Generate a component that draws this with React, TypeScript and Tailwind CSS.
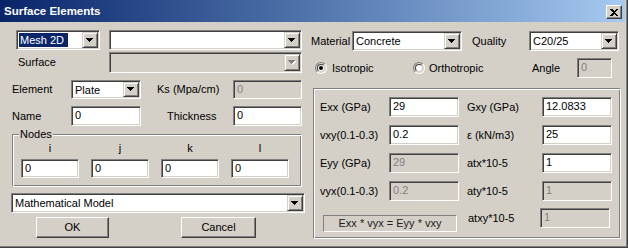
import React from 'react';

const sunken =
  'border border-t-[#808080] border-l-[#808080] border-b-white border-r-white shadow-[inset_1px_1px_0_#404040,inset_-1px_-1px_0_#d4d0c8]';
const raised =
  'border border-t-[#d4d0c8] border-l-[#d4d0c8] border-r-[#404040] border-b-[#404040] shadow-[inset_1px_1px_0_#fff,inset_-1px_-1px_0_#808080] bg-[#d4d0c8]';
const button =
  'border border-t-white border-l-white border-r-[#404040] border-b-[#404040] shadow-[inset_-1px_-1px_0_#808080] bg-[#d4d0c8]';

function Arrow({ disabled }: { disabled?: boolean }) {
  const fill = disabled ? '#808080' : '#000';
  return (
    <svg width="8" height="5" viewBox="0 0 8 5" shapeRendering="crispEdges">
      {disabled && (
        <g fill="#fff">
          <rect x="1" y="1" width="7" height="1" />
          <rect x="2" y="2" width="5" height="1" />
          <rect x="3" y="3" width="3" height="1" />
          <rect x="4" y="4" width="1" height="1" />
        </g>
      )}
      <g fill={fill}>
        <rect x="0" y="0" width="7" height="1" />
        <rect x="1" y="1" width="5" height="1" />
        <rect x="2" y="2" width="3" height="1" />
        <rect x="3" y="3" width="1" height="1" />
      </g>
    </svg>
  );
}

function Combo({
  value,
  className,
  disabled,
  selected,
}: {
  value?: string;
  className: string;
  disabled?: boolean;
  selected?: boolean;
}) {
  return (
    <div className={`${sunken} ${className} flex p-[1px] ${disabled ? 'bg-[#d4d0c8]' : 'bg-white'}`}>
      <div className="flex-1 flex items-start pl-[1px] pt-[1px] overflow-hidden leading-[14px]">
        {selected ? (
          <span className="bg-[#0a246a] text-white px-[1px] pr-[4px]">{value}</span>
        ) : (
          <span className="px-[1px]">{value}</span>
        )}
      </div>
      <div className={`${raised} w-[16px] h-full flex items-center justify-center`}>
        <Arrow disabled={disabled} />
      </div>
    </div>
  );
}

function Edit({ value, className, disabled }: { value: string; className: string; disabled?: boolean }) {
  return (
    <div
      className={`${sunken} ${className} h-[20px] pl-[3px] pt-[2px] leading-[13px] ${
        disabled ? 'bg-[#d4d0c8] text-[#808080]' : 'bg-white'
      }`}
    >
      {value}
    </div>
  );
}

function Radio({ checked }: { checked?: boolean }) {
  return (
    <div className="w-[12px] h-[12px] rounded-full border border-t-[#808080] border-l-[#808080] border-b-white border-r-white bg-[#d4d0c8] p-[1px]">
      <div className="w-full h-full rounded-full bg-white border border-t-[#404040] border-l-[#404040] border-b-[#d4d0c8] border-r-[#d4d0c8] flex items-center justify-center">
        {checked && <div className="w-[4px] h-[4px] rounded-full bg-black" />}
      </div>
    </div>
  );
}

const rows = [
  { l1: 'Exx (GPa)', v1: '29', l2: 'Gxy (GPa)', v2: '12.0833' },
  { l1: 'vxy(0.1-0.3)', v1: '0.2', l2: 'ε (kN/m3)', v2: '25' },
  { l1: 'Eyy (GPa)', v1: '29', d1: true, l2: 'atx*10-5', v2: '1' },
  { l1: 'vyx(0.1-0.3)', v1: '0.2', d1: true, l2: 'aty*10-5', v2: '1', d2: true },
];

export default function App() {
  return (
    <div
      className="w-[628px] h-[248px] bg-[#d4d0c8] border-r border-b border-r-[#404040] border-b-[#404040] shadow-[inset_-1px_-1px_0_#808080] pr-[2px] overflow-hidden text-[11px] text-black"
      style={{ fontFamily: '"Liberation Sans", Arial, sans-serif' }}
    >
      {/* title bar */}
      <div className="h-[22px] bg-linear-to-r from-[#0a246a] to-[#a6caf0] flex items-start justify-between pl-[4px] pr-[3px]">
        <span className="text-white font-bold text-[11.5px] leading-[14px] mt-[4px]">Surface Elements</span>
        <div className={`${button} w-[16px] h-[14px] mt-[5px] flex items-center justify-center`}>
          <svg width="8" height="7" viewBox="0 0 8 7" shapeRendering="crispEdges">
            <path d="M0 0h2l2 2 2-2h2L5 3.5 8 7H6L4 5 2 7H0l3-3.5z" fill="#000" />
          </svg>
        </div>
      </div>

      <div className="flex">
        {/* left column */}
        <div className="w-[311px] flex flex-col">
          <div className="flex h-[20px] mt-[8px] pl-[16px] gap-[9px]">
            <Combo value="Mesh 2D" selected className="w-[84px] h-[20px]" />
            <Combo className="w-[193px] h-[20px]" />
          </div>
          <div className="flex items-center h-[21px] mt-[2px]">
            <span className="w-[109px] pl-[18px]">Surface</span>
            <Combo disabled className="w-[193px] h-[21px]" />
          </div>
          <div className="flex items-center h-[19px] mt-[7px]">
            <span className="w-[71px] pl-[12px]">Element</span>
            <Combo value="Plate" className="w-[70px] h-[19px]" />
            <span className="w-[92px] pl-[16px]">Ks (Mpa/cm)</span>
            <Edit value="0" disabled className="w-[69px] !h-[19px]" />
          </div>
          <div className="flex items-center h-[20px] mt-[7px]">
            <span className="w-[71px] pl-[12px]">Name</span>
            <Edit value="0" className="w-[70px]" />
            <span className="w-[92px] pl-[26px]">Thickness</span>
            <Edit value="0" className="w-[69px]" />
          </div>

          <fieldset className="ml-[12px] w-[290px] mt-[2px] border border-[#808080] border-b-white border-r-white shadow-[inset_1px_1px_0_#fff,inset_-1px_-1px_0_#808080] pb-[8px]">
            <legend className="ml-[6px] px-[1px] leading-[13px] bg-[#d4d0c8]">Nodes</legend>
            <div className="flex pl-[8px] gap-[12px] leading-[13px] mt-[1px]">
              {['i', 'j', 'k', 'l'].map(n => (
                <span key={n} className="w-[58px] text-center">
                  {n}
                </span>
              ))}
            </div>
            <div className="flex pl-[8px] gap-[12px] mt-[4px]">
              {['a', 'b', 'c', 'd'].map(n => (
                <Edit key={n} value="0" className="w-[58px] !h-[19px]" />
              ))}
            </div>
          </fieldset>

          <Combo value="Mathematical Model" className="ml-[11px] w-[294px] h-[20px] mt-[6px]" />

          <div className="flex mt-[4px] h-[21px]">
            <div className={`${button} ml-[36px] w-[73px] h-[21px] flex items-center justify-center`}>OK</div>
            <div className={`${button} ml-[72px] w-[75px] h-[21px] flex items-center justify-center`}>Cancel</div>
          </div>
        </div>

        {/* right column */}
        <div className="flex flex-col">
          <div className="flex items-center h-[20px] mt-[9px]">
            <span className="w-[41px]">Material</span>
            <Combo value="Concrete" className="w-[110px] h-[20px]" />
            <span className="w-[67px] pl-[10px]">Quality</span>
            <Combo value="C20/25" className="w-[90px] h-[20px]" />
          </div>
          <div className="flex items-center h-[20px] mt-[7px]">
            <div className="w-[102px] pl-[4px] flex items-center gap-[5px]">
              <Radio checked />
              <span>Isotropic</span>
            </div>
            <div className="w-[119px] flex items-center gap-[4px]">
              <Radio />
              <span>Orthotropic</span>
            </div>
            <span className="w-[45px]">Angle</span>
            <Edit value="0" disabled className="w-[35px]" />
          </div>

          <div className="ml-[2px] mt-[10px] w-[308px] h-[151px] border border-[#808080] border-b-white border-r-white shadow-[inset_1px_1px_0_#fff,inset_-1px_-1px_0_#808080] pl-[6px] pt-[8px] flex flex-col gap-[8px]">
            {rows.map(r => (
              <div key={r.l1} className="flex items-center h-[20px]">
                <span className="w-[69px]">{r.l1}</span>
                <Edit value={r.v1} disabled={r.d1} className="w-[70px]" />
                <span className="w-[83px] pl-[8px]">{r.l2}</span>
                <Edit value={r.v2} disabled={r.d2} className="w-[70px]" />
              </div>
            ))}
            <div className="flex items-start h-[24px] -mt-[1px]">
              <div className="ml-[3px] mt-[7px] w-[134px] h-[17px] border border-t-[#808080] border-l-[#808080] border-b-white border-r-white flex items-center justify-center text-[#202020]">
                Exx * vyx = Eyy * vxy
              </div>
              <span className="w-[83px] pl-[11px] h-[20px] flex items-center">atxy*10-5</span>
              <Edit value="1" disabled className="w-[70px]" />
            </div>
          </div>
        </div>
      </div>
    </div>
  );
}
